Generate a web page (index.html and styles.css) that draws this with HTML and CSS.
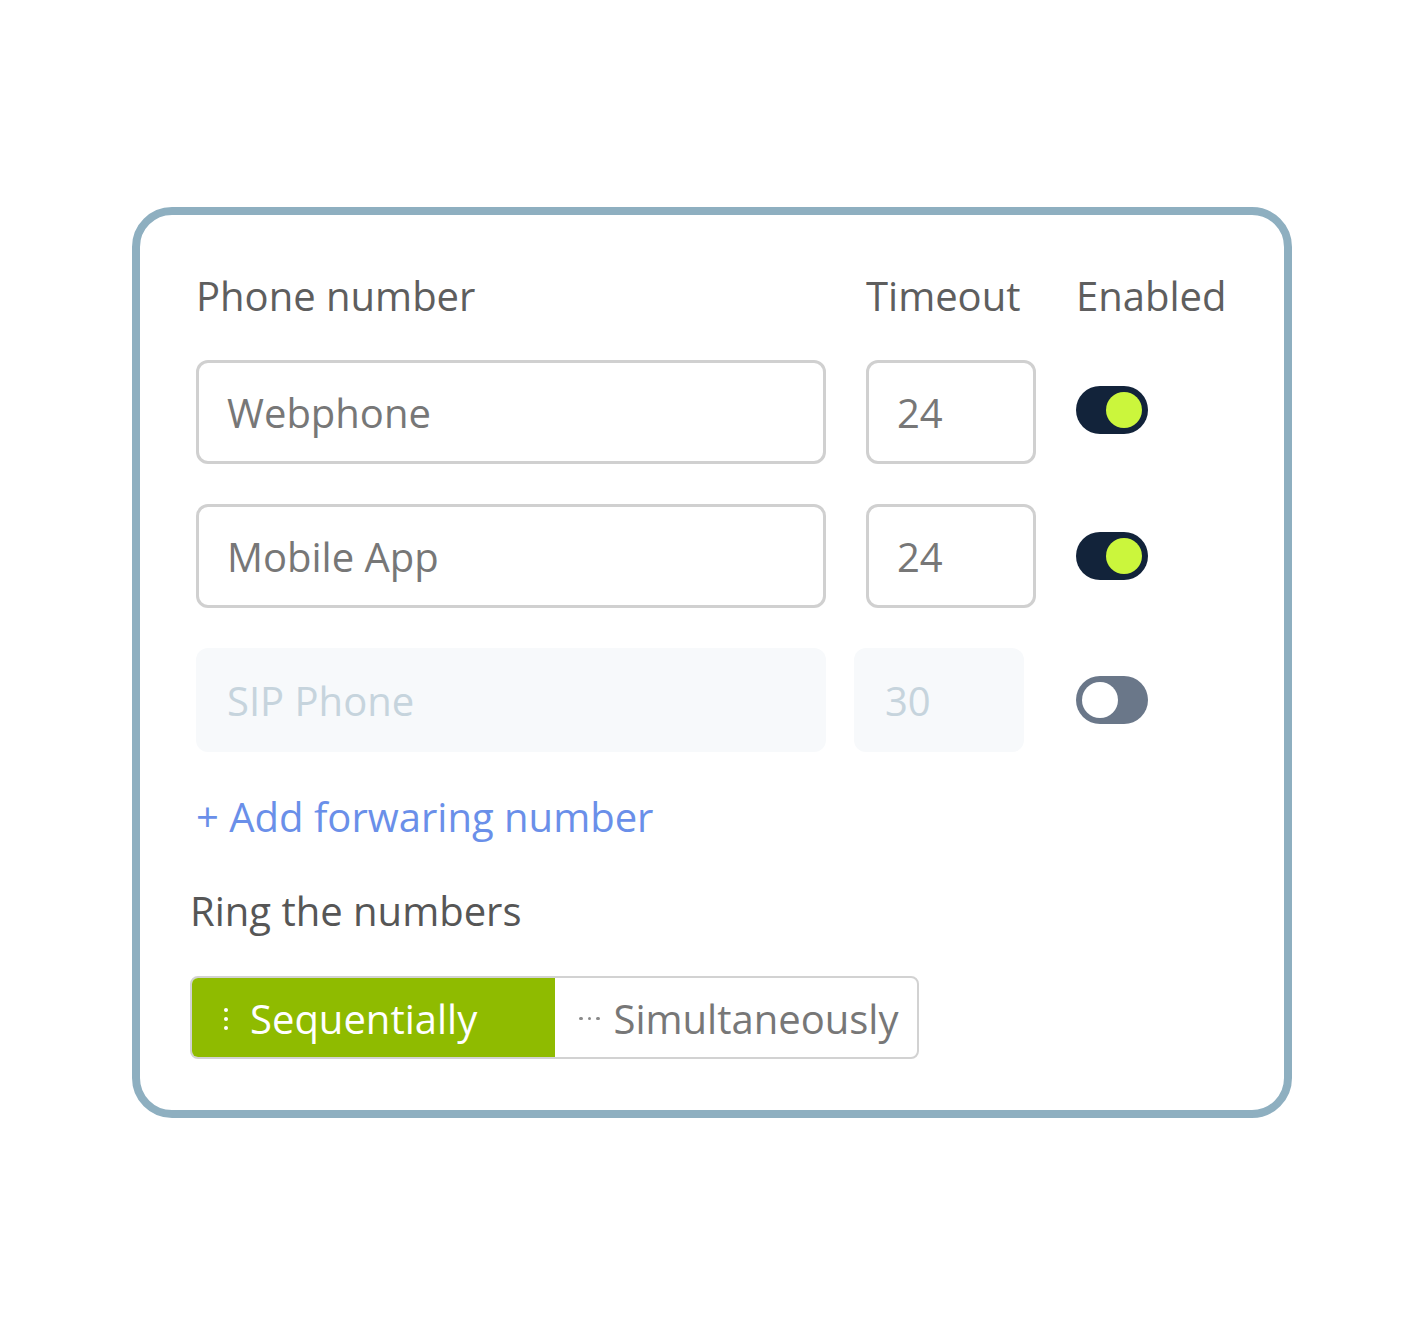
FILE: index.html
```html
<!DOCTYPE html>
<html lang="en">
<head>
<meta charset="utf-8">
<title>Forwarding numbers</title>
<link rel="stylesheet" href="styles.css">
</head>
<body>
<div class="page">
  <div class="card">
    <div class="row head">
      <div class="h h-phone">Phone number</div>
      <div class="h h-timeout">Timeout</div>
      <div class="h h-enabled">Enabled</div>
    </div>
    <div class="row">
      <div class="field">Webphone</div>
      <div class="field">24</div>
      <div class="toggle on up"><span class="knob"></span></div>
    </div>
    <div class="row">
      <div class="field">Mobile App</div>
      <div class="field">24</div>
      <div class="toggle on"><span class="knob"></span></div>
    </div>
    <div class="row">
      <div class="field disabled">SIP Phone</div>
      <div class="field disabled shift">30</div>
      <div class="toggle off"><span class="knob"></span></div>
    </div>
    <div class="add">+ Add forwaring number</div>
    <div class="ring-label">Ring the numbers</div>
    <div class="segmented">
      <div class="seg active">
        <span class="icon icon-v"><i></i><i></i><i></i></span>
        <span class="seg-text">Sequentially</span>
      </div>
      <div class="seg">
        <span class="icon icon-h"><i></i><i></i><i></i></span>
        <span class="seg-text">Simultaneously</span>
      </div>
    </div>
  </div>
</div>
</body>
</html>
```
FILE: styles.css
```css
* { box-sizing: border-box; }
html, body { margin: 0; padding: 0; background: #ffffff; }
body {
  font-family: "Open Sans", "Noto Sans", sans-serif;
  font-size: 40px;
}
.page {
  padding: 207px 0 0 132px;
}
.card {
  width: 1160px;
  border: 8px solid #8eafc0;
  border-radius: 40px;
  padding: 58px 56px 51px 56px;
  display: flex;
  flex-direction: column;
}
.row {
  display: grid;
  grid-template-columns: 630px 170px 72px;
  column-gap: 40px;
  align-items: center;
  margin-bottom: 40px;
}
.row.head {
  margin-bottom: 41px;
}
.h {
  line-height: 46px;
  color: #5e5e5e;
  white-space: nowrap;
}
.h-phone { margin-left: 0; }
.h-enabled { margin-left: 0; }
.field {
  height: 104px;
  border: 3px solid #d0d0d0;
  border-radius: 12px;
  padding: 0 28px;
  display: flex;
  align-items: center;
  color: #777777;
  white-space: nowrap;
}
.field.disabled {
  border: none;
  background: #f7f9fb;
  color: #c6d4dd;
  padding: 0 31px;
}
.field.shift {
  margin-left: -12px;
  width: 170px;
  justify-self: start;
}
.toggle {
  width: 72px;
  height: 48px;
  border-radius: 24px;
  padding: 6px;
  display: flex;
}
.toggle.up { margin-top: -4px; }
.toggle.on { background: #12233a; justify-content: flex-end; }
.toggle.off { background: #6a7789; justify-content: flex-start; }
.knob {
  width: 36px;
  height: 36px;
  border-radius: 50%;
}
.toggle.on .knob { background: #cbf63c; }
.toggle.off .knob { background: #ffffff; }
.add {
  color: #6a8fe9;
  line-height: 48px;
  margin-top: 1px;
  white-space: nowrap;
}
.ring-label {
  color: #565656;
  line-height: 48px;
  margin-top: 46px;
  margin-left: -6px;
}
.segmented {
  margin-top: 41px;
  margin-left: -6px;
  width: 729px;
  height: 83px;
  border: 2px solid #d2d2d2;
  border-radius: 8px;
  overflow: hidden;
  display: flex;
}
.seg {
  width: 364px;
  display: flex;
  align-items: center;
  color: #777777;
  white-space: nowrap;
  padding-top: 2px;
}
.seg.active {
  background: #8fbb00;
  color: #ffffff;
  padding-left: 26px;
}
.seg:not(.active) { padding-left: 22px; }
.icon { display: flex; align-items: center; justify-content: center; }
.icon i {
  display: block;
  width: 4px;
  height: 4px;
  border-radius: 50%;
  background: currentColor;
}
.icon-v {
  width: 16px;
  flex-direction: column;
  gap: 5px;
  margin-right: 16px;
}
.icon-h {
  width: 26px;
  gap: 5px;
  margin-right: 11px;
}
.icon-h i { width: 3.5px; height: 3.5px; background: #8a8a8a; }
```
